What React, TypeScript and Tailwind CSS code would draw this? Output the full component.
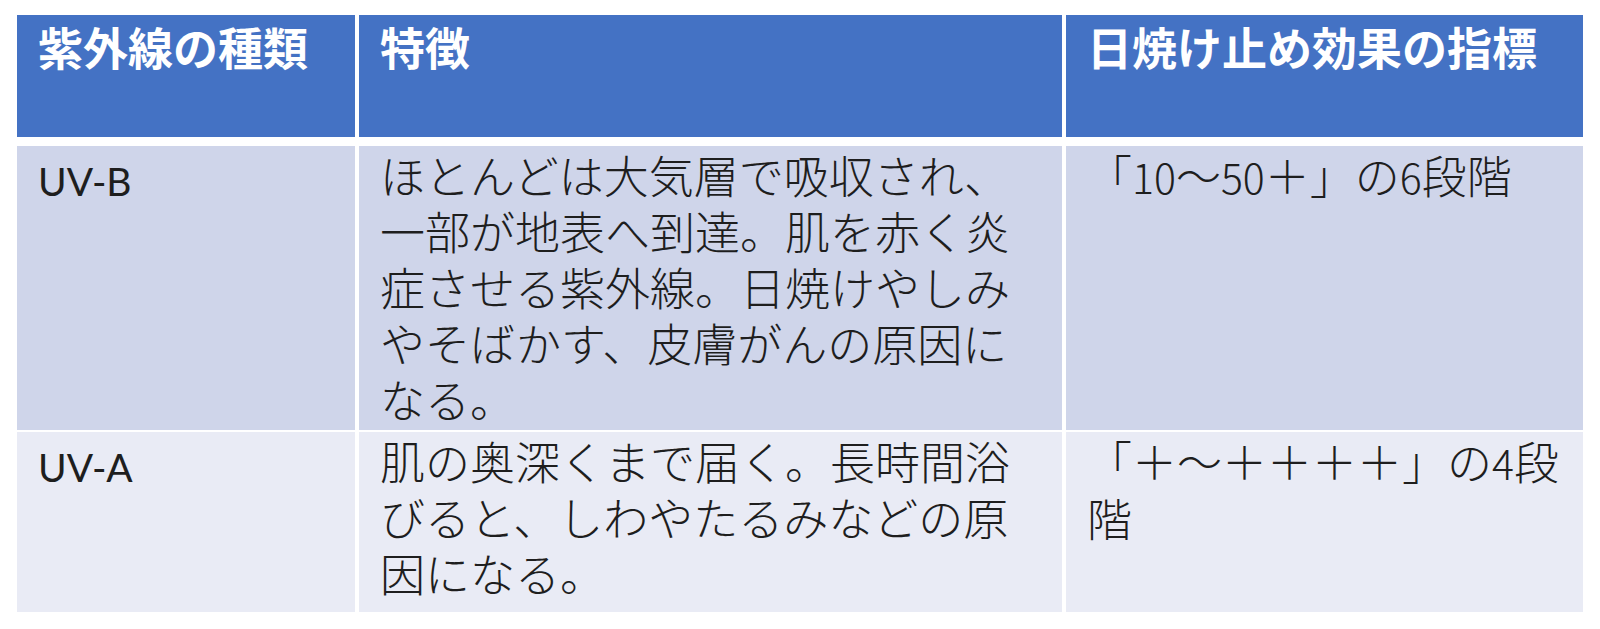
import React from "react";

const cols = "grid grid-cols-[338px_703px_517px] gap-x-[4px]";

function Num({ children }: { children: React.ReactNode }) {
  return <span className="text-[41px]">{children}</span>;
}

export default function App() {
  return (
    <div className="w-[1600px] h-[629px] bg-white pt-[15px] pl-[17px] font-['Noto_Sans_CJK_JP',sans-serif] [text-spacing-trim:space-all] overflow-hidden">
      {/* Header */}
      <div className={`${cols} h-[122px]`}>
        <div className="bg-[#4472C4] text-white font-bold text-[45px] leading-[56px] pt-[4px] pl-[21px]">
          紫外線の種類
        </div>
        <div className="bg-[#4472C4] text-white font-bold text-[45px] leading-[56px] pt-[4px] pl-[21px]">
          特徴
        </div>
        <div className="bg-[#4472C4] text-white font-bold text-[45px] leading-[56px] pt-[4px] pl-[21px] whitespace-nowrap">
          日焼け止め効果の指標
        </div>
      </div>

      {/* Row 1 */}
      <div className={`${cols} h-[284px] mt-[9px]`}>
        <div className="bg-[#CFD5EA] text-[#1e1e1e] font-['Lato',sans-serif] text-[39px] leading-[56px] pt-[7px] pl-[21px]">
          UV-B
        </div>
        <div className="bg-[#CFD5EA] text-[#1e1e1e] font-light text-[45px] leading-[56px] pt-[1px] pl-[21px] pr-[21px]">
          ほとんどは大気層で吸収され、一部が地表へ到達。肌を赤く炎症させる紫外線。日焼けやしみやそばかす、皮膚がんの原因になる。
        </div>
        <div className="bg-[#CFD5EA] text-[#1e1e1e] font-light text-[45px] leading-[56px] pt-[1px] pl-[21px] pr-[10px]">
          「<Num>10</Num>～<Num>50</Num>＋」の<Num>6</Num>段階
        </div>
      </div>

      {/* Row 2 */}
      <div className={`${cols} h-[180px] mt-[2px]`}>
        <div className="bg-[#E9EBF5] text-[#1e1e1e] font-['Lato',sans-serif] text-[39px] leading-[56px] pt-[7px] pl-[21px]">
          UV-A
        </div>
        <div className="bg-[#E9EBF5] text-[#1e1e1e] font-light text-[45px] leading-[56px] pt-[1px] pl-[21px] pr-[21px]">
          肌の奥深くまで届く。長時間浴びると、しわやたるみなどの原因になる。
        </div>
        <div className="bg-[#E9EBF5] text-[#1e1e1e] font-light text-[45px] leading-[56px] pt-[1px] pl-[21px] pr-[10px]">
          「＋～＋＋＋＋」の<Num>4</Num>段階
        </div>
      </div>
    </div>
  );
}
